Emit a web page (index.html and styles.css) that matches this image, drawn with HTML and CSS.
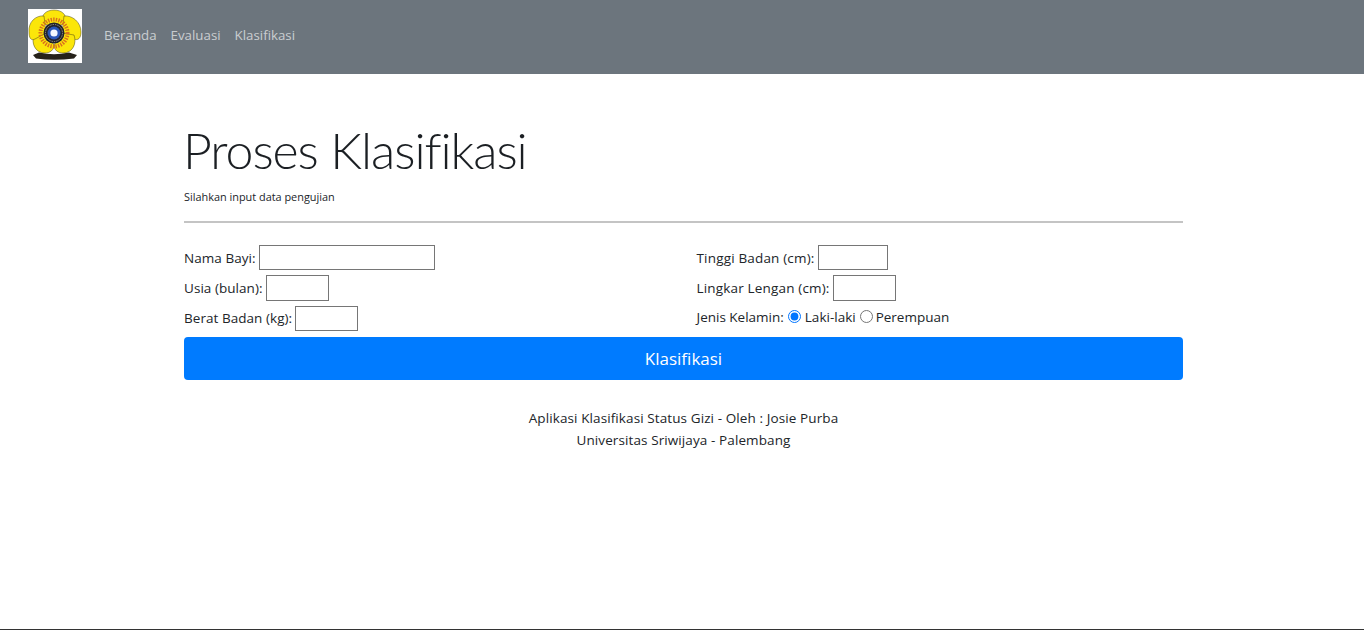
FILE: index.html
```html
<!doctype html>
<html lang="id">
  <head>
    <meta charset="UTF-8" />
    <meta name="viewport" content="width=device-width, initial-scale=1.0" />
    <title>Proses Klasifikasi</title>
    <link rel="stylesheet" href="styles.css">
  </head>
  <body>
    <nav class="navbar">
      <svg class="logo" viewBox="0 0 54 54" role="img" aria-label="Logo Universitas Sriwijaya">
        <rect width="54" height="54" fill="#fff" />
        <g fill="#fbe60a" stroke="#4a4415" stroke-width="0.5">
          <path d="M26 1 C34 1 39 6 38 13 L26 20 L14 13 C13 6 18 1 26 1 Z" />
          <path d="M36 7 C44 6 53 13 53 23 C53 29 50 32 46 30 L34 24 Z" />
          <path d="M46 26 C49 34 45 44 35 44 C30 44 26 41 26 36 L34 24 Z" />
          <path d="M6 26 C3 34 7 44 17 44 C22 44 26 41 26 36 L18 24 Z" />
          <path d="M16 7 C8 6 0 13 1 23 C1 29 3 32 7 30 L18 24 Z" />
        </g>
        <circle cx="26" cy="24" r="13.5" fill="none" stroke="#d9701e" stroke-width="4" stroke-dasharray="1.4 1.2" />
        <circle cx="26" cy="24" r="10.5" fill="#23222a" />
        <circle cx="26" cy="24" r="8.5" fill="none" stroke="#9a9a90" stroke-width="1" stroke-dasharray="1.4 1" />
        <circle cx="26" cy="24" r="6.5" fill="#2a56b8" />
        <circle cx="26" cy="24" r="3.6" fill="#f4f8ff" />
        <path d="M5 46 L11 43.5 Q26 47 41 43.5 L49 46 L46 49.5 Q26 52 8 49.5 Z" fill="#26221a" />
      </svg>
      <ul class="nav-links">
        <li><a href="#">Beranda</a></li>
        <li><a href="#">Evaluasi</a></li>
        <li><a href="#">Klasifikasi</a></li>
      </ul>
    </nav>

    <main class="container">
      <h1 class="page-title">Proses Klasifikasi</h1>
      <p class="page-sub">Silahkan input data pengujian</p>
      <hr class="divider" />

      <form class="form-klasifikasi">
        <div class="form-grid">
          <div class="form-col">
            <div class="field">
              <label for="nama">Nama Bayi:</label>
              <input class="input-nama" id="nama" type="text" />
            </div>
            <div class="field field-tall">
              <label for="usia">Usia (bulan):</label>
              <input class="input-small" id="usia" type="text" />
            </div>
            <div class="field field-raised">
              <label for="berat">Berat Badan (kg):</label>
              <input class="input-small" id="berat" type="text" />
            </div>
          </div>
          <div class="form-col form-col-right">
            <div class="field">
              <label for="tinggi">Tinggi Badan (cm):</label>
              <input class="input-tinggi" id="tinggi" type="text" />
            </div>
            <div class="field field-tall">
              <label for="lila">Lingkar Lengan (cm):</label>
              <input class="input-small" id="lila" type="text" />
            </div>
            <div class="field field-radio">
              <span>Jenis Kelamin:</span>
              <input id="laki" type="radio" name="jk" checked />
              <label for="laki">Laki-laki</label>
              <input class="radio-last" id="perempuan" type="radio" name="jk" />
              <label for="perempuan">Perempuan</label>
            </div>
          </div>
        </div>
        <button class="btn-klasifikasi" type="button">Klasifikasi</button>
      </form>

      <footer class="credit">
        <p>Aplikasi Klasifikasi Status Gizi - Oleh : Josie Purba</p>
        <p>Universitas Sriwijaya - Palembang</p>
      </footer>
    </main>
  </body>
</html>
```

FILE: styles.css
```css
* {
  margin: 0;
  padding: 0;
  box-sizing: border-box;
}

body {
  font-family: "Open Sans", "Noto Sans", sans-serif;
  font-size: 13.5px;
  color: #212529;
  background: #fff;
  height: 630px;
  border-bottom: 1px solid #333;
  overflow: hidden;
}

.navbar {
  display: flex;
  align-items: center;
  height: 74px;
  padding: 0 28px;
  background: #6c757d;
}

.logo {
  width: 54px;
  height: 54px;
  margin-bottom: 2px;
}

.nav-links {
  display: flex;
  gap: 14px;
  margin-left: 22px;
  margin-bottom: 4px;
  font-size: 13.3px;
  list-style: none;
}

.nav-links a {
  color: rgba(255, 255, 255, 0.65);
  text-decoration: none;
}

.container {
  width: 999px;
  margin-left: 184px;
}

.page-title {
  margin-top: 42px;
  margin-left: -1px;
  font-family: "Lato", "Open Sans", sans-serif;
  font-size: 50px;
  font-weight: 300;
  line-height: 68px;
  letter-spacing: -1.05px;
  color: #1b1f23;
}

.page-sub {
  margin-top: 5px;
  font-size: 10.9px;
  line-height: 16px;
}

.divider {
  margin-top: 16px;
  border: 0;
  border-top: 2px solid #c4c4c4;
}

.form-klasifikasi {
  margin-top: 22px;
}

.form-grid {
  display: grid;
  grid-template-columns: 1fr 1fr;
}

.form-col {
  letter-spacing: 0.05px;
}

.form-col-right {
  padding-left: 13px;
  letter-spacing: 0.17px;
}

.field {
  display: flex;
  align-items: center;
  gap: 3px;
  height: 25px;
  margin-bottom: 5px;
}

.field-tall {
  height: 26px;
}

.field-raised label {
  padding-bottom: 2px;
}

.field input[type="text"] {
  height: 100%;
  border: 1px solid #767676;
  background: #fff;
}

.input-nama {
  width: 176px;
}

.input-tinggi {
  width: 70px;
}

.input-small {
  width: 63px;
}

.field-radio {
  height: 21px;
  letter-spacing: 0;
}

.field-radio input {
  width: 13px;
  height: 13px;
  margin: 0 1px;
}

.field-radio .radio-last {
  margin-right: 0;
}

.btn-klasifikasi {
  display: block;
  width: 100%;
  height: 43px;
  margin-top: 1px;
  border: none;
  border-radius: 4px;
  background: #007bff;
  color: #fff;
  font-family: inherit;
  font-size: 17px;
  cursor: pointer;
}

.credit {
  margin-top: 27px;
  text-align: center;
  line-height: 22px;
  letter-spacing: 0.1px;
}
```
